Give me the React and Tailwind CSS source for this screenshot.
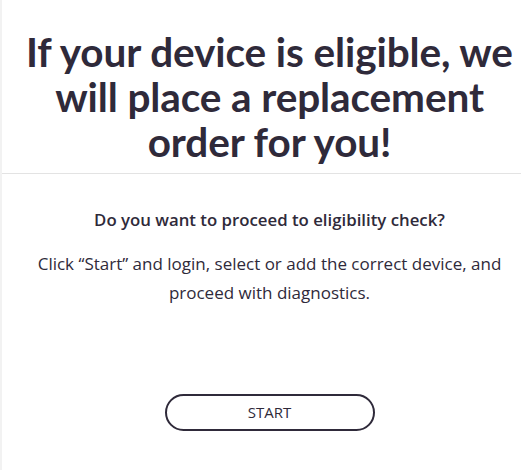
export default function App() {
  return (
    <div className="min-h-[470px] bg-white border-l-2 border-[#f2f2f2] text-[#2f2a3a]" style={{ fontFamily: 'Lato, "Noto Sans", sans-serif' }}>
      {/* Header */}
      <div className="pl-[16px] pt-[29px] pb-[9px] border-b border-[#e3e3e3]">
        <h1 className="text-center text-[40.5px] leading-[45px] font-bold tracking-[-0.1px]">
          If your device is eligible, we will place a replacement order for you!
        </h1>
      </div>

      {/* Body */}
      <div className="flex flex-col items-center pl-[16px] pt-[34px]" style={{ fontFamily: '"Open Sans", sans-serif' }}>
        <p className="text-[16.8px] font-semibold leading-6">Do you want to proceed to eligibility check?</p>
        <p className="mt-[17px] text-center text-[17px] leading-[29px]">
          Click “Start” and login, select or add the correct device, and proceed with diagnostics.
        </p>
        <button className="mt-[87px] w-[210px] h-[37px] rounded-full border-2 border-[#2f2a3a] text-[15px] text-[#2f2a3a]">
          START
        </button>
      </div>
    </div>
  );
}
